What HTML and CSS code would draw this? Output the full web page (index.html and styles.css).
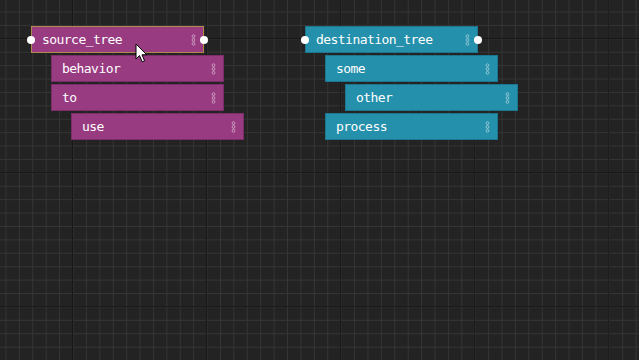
FILE: index.html
```html
<!DOCTYPE html>
<html lang="en">
<head>
    <meta charset="UTF-8">
    <title>Tree Mapper</title>
    <link rel="stylesheet" href="styles.css">
</head>
<body>
    <div class="canvas">
        <div class="tree tree-source">
            <div class="node root selected">
                <span class="port port-in"></span>
                <span class="label">source_tree</span>
                <svg class="grip" width="5" height="12" viewBox="0 0 5 12"><circle cx="2.5" cy="2.2" r="1.4"/><circle cx="2.5" cy="6" r="1.4"/><circle cx="2.5" cy="9.8" r="1.4"/></svg>
                <span class="port port-out"></span>
            </div>
            <div class="node depth-1">
                <span class="label">behavior</span>
                <svg class="grip" width="5" height="12" viewBox="0 0 5 12"><circle cx="2.5" cy="2.2" r="1.4"/><circle cx="2.5" cy="6" r="1.4"/><circle cx="2.5" cy="9.8" r="1.4"/></svg>
            </div>
            <div class="node depth-1">
                <span class="label">to</span>
                <svg class="grip" width="5" height="12" viewBox="0 0 5 12"><circle cx="2.5" cy="2.2" r="1.4"/><circle cx="2.5" cy="6" r="1.4"/><circle cx="2.5" cy="9.8" r="1.4"/></svg>
            </div>
            <div class="node depth-2">
                <span class="label">use</span>
                <svg class="grip" width="5" height="12" viewBox="0 0 5 12"><circle cx="2.5" cy="2.2" r="1.4"/><circle cx="2.5" cy="6" r="1.4"/><circle cx="2.5" cy="9.8" r="1.4"/></svg>
            </div>
        </div>

        <div class="tree tree-dest">
            <div class="node root">
                <span class="port port-in"></span>
                <span class="label">destination_tree</span>
                <svg class="grip" width="5" height="12" viewBox="0 0 5 12"><circle cx="2.5" cy="2.2" r="1.4"/><circle cx="2.5" cy="6" r="1.4"/><circle cx="2.5" cy="9.8" r="1.4"/></svg>
                <span class="port port-out"></span>
            </div>
            <div class="node depth-1">
                <span class="label">some</span>
                <svg class="grip" width="5" height="12" viewBox="0 0 5 12"><circle cx="2.5" cy="2.2" r="1.4"/><circle cx="2.5" cy="6" r="1.4"/><circle cx="2.5" cy="9.8" r="1.4"/></svg>
            </div>
            <div class="node depth-2">
                <span class="label">other</span>
                <svg class="grip" width="5" height="12" viewBox="0 0 5 12"><circle cx="2.5" cy="2.2" r="1.4"/><circle cx="2.5" cy="6" r="1.4"/><circle cx="2.5" cy="9.8" r="1.4"/></svg>
            </div>
            <div class="node depth-1">
                <span class="label">process</span>
                <svg class="grip" width="5" height="12" viewBox="0 0 5 12"><circle cx="2.5" cy="2.2" r="1.4"/><circle cx="2.5" cy="6" r="1.4"/><circle cx="2.5" cy="9.8" r="1.4"/></svg>
            </div>
        </div>

        <!-- mouse pointer -->
        <svg class="cursor" width="14" height="21" viewBox="0 0 14 21">
            <path d="M1 1 L1 16 L4.5 12.6 L7.2 18.8 L9.6 17.8 L7 11.8 L11.8 11.8 Z"/>
        </svg>
    </div>
</body>
</html>
```

FILE: styles.css
```css
body {
    margin: 0;
    padding: 0;
    background: #232323;
    font-family: 'DejaVu Sans Mono', 'Liberation Mono', monospace;
}

.canvas {
    position: relative;
    width: 639px;
    height: 360px;
    overflow: hidden;
    background-color: #232323;
    background-image:
        linear-gradient(#171717 1px, transparent 1px),
        linear-gradient(90deg, #171717 1px, transparent 1px),
        linear-gradient(#353535 1px, transparent 1px),
        linear-gradient(90deg, #353535 1px, transparent 1px);
    background-size:
        134.1px 134.1px,
        134.1px 134.1px,
        13.41px 13.41px,
        13.41px 13.41px;
    background-position:
        0 38px,
        72px 0,
        0 11.5px,
        5.5px 0;
}

.tree {
    position: absolute;
    display: flex;
    flex-direction: column;
    gap: 2px;
}

.tree-source {
    left: 31px;
    top: 26px;
}

.tree-dest {
    left: 305px;
    top: 26px;
}

.node {
    position: relative;
    box-sizing: border-box;
    width: 173px;
    height: 27px;
    display: flex;
    align-items: center;
    justify-content: space-between;
    padding: 0 7px 0 10px;
    border: 1px solid;
    color: #fff;
    font-size: 13px;
    letter-spacing: -0.55px;
}

.tree-source .node {
    background-color: #983b81;
    border-color: #7c2d69;
}

.tree-dest .node {
    background-color: #2490ab;
    border-color: #1c7690;
}

.tree-source .node.selected {
    border-color: #b3884e;
}

.depth-1 {
    margin-left: 20px;
}

.depth-2 {
    margin-left: 40px;
}

.label {
    white-space: nowrap;
}

.grip circle {
    fill: none;
    stroke: rgba(255, 255, 255, 0.5);
    stroke-width: 0.9;
}

.port {
    position: absolute;
    top: 50%;
    width: 8px;
    height: 8px;
    margin-top: -4px;
    border-radius: 50%;
    background: #fff;
}

.port-in {
    left: -5px;
}

.port-out {
    right: -5px;
}

.cursor {
    position: absolute;
    left: 135px;
    top: 43px;
}

.cursor path {
    fill: #fff;
    stroke: #000;
    stroke-width: 1;
    stroke-linejoin: round;
}
```
